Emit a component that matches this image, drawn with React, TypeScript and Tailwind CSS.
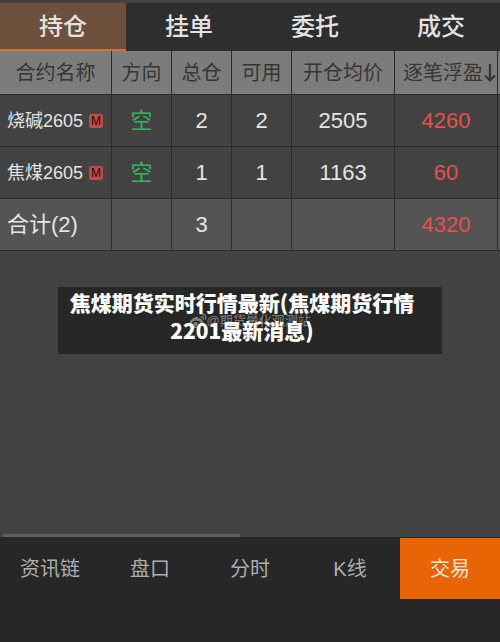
import { useState } from "react";
import clsx from "clsx";

interface Position {
    name: string;
    side: string;
    total: number;
    available: number;
    price: number;
    profit: number;
}

const positions: Position[] = [
    { name: "烧碱2605", side: "空", total: 2, available: 2, price: 2505, profit: 4260 },
    { name: "焦煤2605", side: "空", total: 1, available: 1, price: 1163, profit: 60 },
];

const tabs = ["持仓", "挂单", "委托", "成交"];
const navItems = ["资讯链", "盘口", "分时", "K线", "交易"];

const cell = "border-r border-b border-[#2c2c2c] p-0 text-center font-normal whitespace-nowrap";

function TopTabs() {
    const [active, setActive] = useState("持仓");

    return (
        <div className="mt-[3px] flex h-12 overflow-hidden bg-[#2e2e2e]">
            {tabs.map((tab) => (
                <button
                    key={tab}
                    onClick={() => setActive(tab)}
                    className={clsx(
                        "w-[25.2%] shrink-0 border-b-2 pt-0.5 text-2xl font-medium text-[#e2e2e2]",
                        tab === active ? "border-[#d96f2c] bg-[#6d503b]" : "border-transparent"
                    )}
                >
                    {tab}
                </button>
            ))}
        </div>
    );
}

function PositionTable() {
    return (
        <table className="w-full table-fixed border-separate border-spacing-0 text-[22px] leading-7 text-[#e4e4e4]">
            <colgroup>
                <col className="w-[22.4%]" />
                <col className="w-[12%]" />
                <col className="w-[12%]" />
                <col className="w-[12%]" />
                <col className="w-[20.6%]" />
                <col className="w-[20.6%]" />
                <col />
            </colgroup>
            <thead>
                <tr className="h-11 bg-[#7c7c7c] text-xl text-[#363636]">
                    <th className={cell}>合约名称</th>
                    <th className={cell}>方向</th>
                    <th className={cell}>总仓</th>
                    <th className={cell}>可用</th>
                    <th className={cell}>开仓均价</th>
                    <th className={cell}>
                        <span className="flex items-center justify-end">
                            逐笔浮盈
                            <svg className="h-5 w-3.5" viewBox="0 0 14 20" fill="none" stroke="currentColor" strokeWidth="2.2">
                                <path d="M7 1v16.500M2 12.500l5 5 5-5" />
                            </svg>
                        </span>
                    </th>
                    <td className="border-b border-[#2c2c2c] p-0" />
                </tr>
            </thead>
            <tbody>
                {positions.map((p) => (
                    <tr key={p.name} className="h-13">
                        <td className={cell}>
                            <span className="flex items-center gap-1.5 pl-[7px] text-lg">
                                {p.name}
                                <span className="flex size-3.5 items-center justify-center rounded-xs bg-[#c04a48] text-xs text-[#1c0c0c]">
                                    M
                                </span>
                            </span>
                        </td>
                        <td className={clsx(cell, "text-[#35b55b]")}>{p.side}</td>
                        <td className={cell}>{p.total}</td>
                        <td className={cell}>{p.available}</td>
                        <td className={cell}>{p.price}</td>
                        <td className={clsx(cell, "text-[#e55050]")}>{p.profit}</td>
                        <td className="border-b border-[#2c2c2c] p-0" />
                    </tr>
                ))}
            </tbody>
            <tfoot>
                <tr className="h-13 bg-[#545454]">
                    <td className={cell}>
                        <span className="flex pl-[7px]">合计({positions.length})</span>
                    </td>
                    <td className={cell} />
                    <td className={cell}>{positions.reduce((sum, p) => sum + p.total, 0)}</td>
                    <td className={cell} />
                    <td className={cell} />
                    <td className={clsx(cell, "text-[#e55050]")}>{positions.reduce((sum, p) => sum + p.profit, 0)}</td>
                    <td className="border-b border-[#2c2c2c] p-0" />
                </tr>
            </tfoot>
        </table>
    );
}

function Watermark() {
    return (
        <div className="absolute top-6 left-[34%] flex items-center text-[13px] leading-5 whitespace-nowrap text-[#808080]">
            <svg className="h-4 w-[18px]" viewBox="0 0 18 16" fill="none">
                <path
                    fill="currentColor"
                    fillRule="evenodd"
                    d="M7 4C8.400 3.500 9.200 4.300 8.800 5.700c2.300-1 4.300-.5 3.600 1.500 1.900.6 2.600 1.700 2 3.400C13.400 13.400 10.200 15 6.800 15 3 15 .4 13.300.4 10.800.4 8.300 4 4.800 7 4ZM7 7.500c-2.500.2-4.600 1.600-4.400 3.400.2 1.800 2.400 2.700 4.900 2.500 2.500-.3 4.400-1.800 4.200-3.500-.2-1.700-2.300-2.600-4.700-2.400Zm-.8 1.600c1.500-.3 2.600.5 2.500 1.700-.1 1.300-1.200 2.200-2.500 2.200s-2.300-.9-2-2.100c.2-.9 1-1.600 2-1.800Z"
                />
                <path stroke="currentColor" strokeWidth="1.300" strokeLinecap="round" d="M12.200 1.200c3.200-.5 5.300 2 4.400 5M12.300 3.700c1.500-.2 2.400.9 2 2.400" />
            </svg>
            @期货量化观测站
        </div>
    );
}

function Headline() {
    return (
        <section className="relative mx-[58px] mt-9 bg-[#272727] pt-px pr-4 pb-2.5 text-center">
            <Watermark />
            <h1 className="relative font-['Noto_Sans_CJK_SC',sans-serif] text-[21px] leading-7 font-black text-white">
                焦煤期货实时行情最新(焦煤期货行情
                <br />
                2201最新消息)
            </h1>
        </section>
    );
}

function BottomNav() {
    return (
        <nav className="flex bg-[#272727] pt-px pb-[43px] text-xl">
            {navItems.map((item) => (
                <button
                    key={item}
                    className={clsx(
                        "h-[61px] flex-1",
                        item === "交易" ? "bg-[#e86404] text-[#f8e6d6]" : "text-[#adadad]"
                    )}
                >
                    {item}
                </button>
            ))}
        </nav>
    );
}

export default function App() {
    return (
        <div className="flex min-h-screen flex-col bg-[#424242] font-['Liberation_Sans','Noto_Sans_CJK_SC',sans-serif]">
            <TopTabs />
            <main className="flex flex-1 flex-col">
                <PositionTable />
                <Headline />
                <div className="mt-auto ml-[3px] h-[3px] w-[47.4%] bg-[#5e5e5e]" />
            </main>
            <BottomNav />
        </div>
    );
}
